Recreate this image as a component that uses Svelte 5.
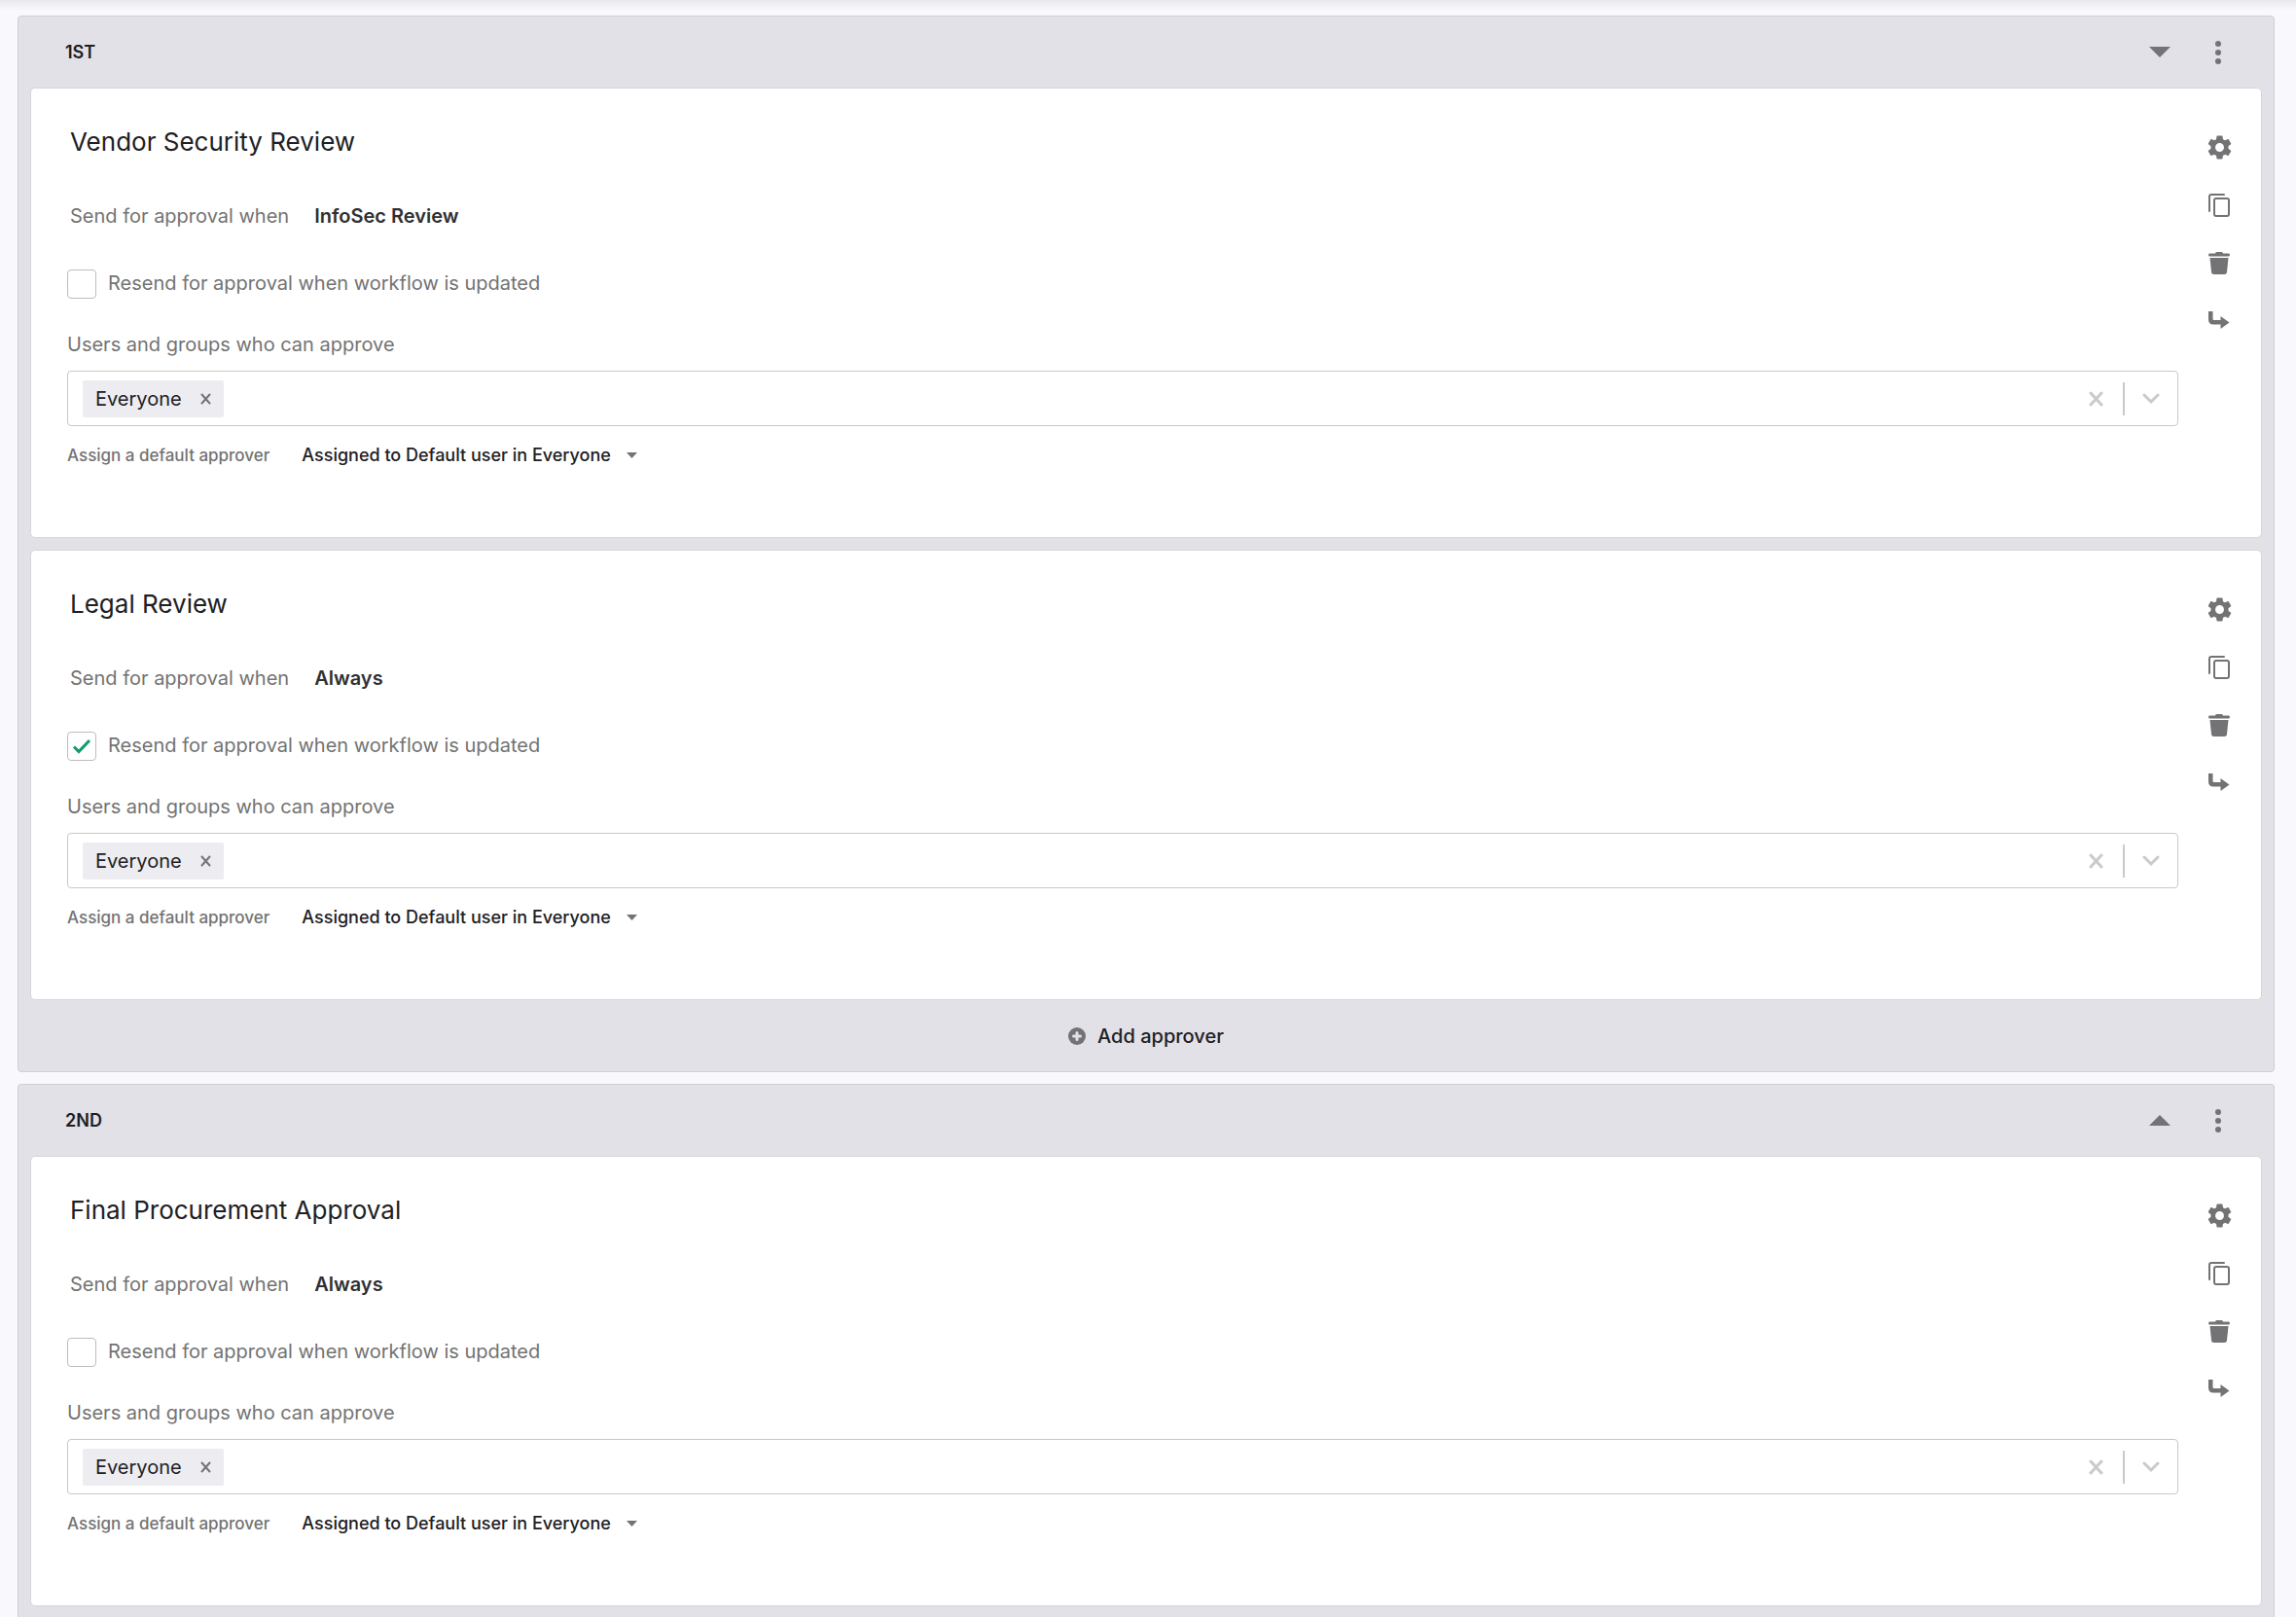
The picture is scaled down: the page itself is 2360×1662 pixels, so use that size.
<script>
  let groups = $state([
    {
      name: '1ST',
      moveLabel: 'Move group down',
      up: false,
      canAdd: true,
      approvers: [
        { title: 'Vendor Security Review', condition: 'InfoSec Review', resend: false, members: ['Everyone'] },
        { title: 'Legal Review', condition: 'Always', resend: true, members: ['Everyone'] }
      ]
    },
    {
      name: '2ND',
      moveLabel: 'Move group up',
      up: true,
      canAdd: false,
      approvers: [
        { title: 'Final Procurement Approval', condition: 'Always', resend: false, members: ['Everyone'] }
      ]
    }
  ]);

  function addApprover(group) {
    group.approvers.push({ title: 'New approver', condition: 'Always', resend: false, members: [] });
  }

  function duplicate(group, i) {
    const copy = $state.snapshot(group.approvers[i]);
    group.approvers.splice(i + 1, 0, copy);
  }

  function remove(group, i) {
    group.approvers.splice(i, 1);
  }

  function removeMember(approver, name) {
    approver.members = approver.members.filter((m) => m !== name);
  }
</script>

<main class="page">
  {#each groups as group, g}
    <section class="group">
      <header class="group-head">
        <h2>{group.name}</h2>
        <div class="head-actions">
          <button class="icon-btn" aria-label={group.moveLabel}>
            <svg width="22" height="11" viewBox="0 0 22 11">
              {#if group.up}
                <path d="M0 11 11 0l11 11z" />
              {:else}
                <path d="M0 0h22L11 11z" />
              {/if}
            </svg>
          </button>
          <button class="icon-btn" aria-label="Group options">
            <svg width="6" height="24" viewBox="0 0 6 24">
              <circle cx="3" cy="3" r="3" />
              <circle cx="3" cy="12" r="3" />
              <circle cx="3" cy="21" r="3" />
            </svg>
          </button>
        </div>
      </header>

      <div class="cards">
        {#each group.approvers as approver, i}
          {@const id = `approver-${g}-${i}`}
          <article class="card">
            <div class="card-body">
              <h3>{approver.title}</h3>

              <div class="condition">
                <span>Send for approval when</span>
                <button class="condition-btn">{approver.condition}</button>
              </div>

              <label class="resend">
                <span class="box">
                  <input type="checkbox" bind:checked={approver.resend} />
                  <svg class="tick" width="20" height="16" viewBox="0 0 20 16">
                    <path d="M2 8.500 7 13.500 18 2" />
                  </svg>
                </span>
                <span>Resend for approval when workflow is updated</span>
              </label>

              <label class="field-label" for="{id}-members">Users and groups who can approve</label>
              <div class="multi">
                {#each approver.members as name}
                  <span class="chip">
                    {name}
                    <button class="chip-x" aria-label="Remove {name}" onclick={() => removeMember(approver, name)}>
                      <svg width="11" height="12" viewBox="0 0 11 12"><path d="M1.500 1.500l8 9M9.500 1.500l-8 9" /></svg>
                    </button>
                  </span>
                {/each}
                <input id="{id}-members" type="text" role="combobox" aria-expanded="false" aria-controls="{id}-list" autocomplete="off" />
                <button class="clear" aria-label="Clear all" onclick={() => (approver.members = [])}>
                  <svg width="15" height="16" viewBox="0 0 15 16"><path d="M2 2l11 12M13 2 2 14" /></svg>
                </button>
                <span class="sep"></span>
                <button class="open" aria-label="Show options">
                  <svg width="18" height="12" viewBox="0 0 18 12"><path d="M2 2l7 7 7-7" /></svg>
                </button>
              </div>

              <div class="default">
                <label for="{id}-default">Assign a default approver</label>
                <span class="default-select">
                  <select id="{id}-default">
                    <option>Assigned to Default user in Everyone</option>
                  </select>
                  <svg width="11" height="6" viewBox="0 0 11 6"><path d="M0 0h11L5.500 6z" /></svg>
                </span>
              </div>
            </div>

            <div class="card-tools">
              <button class="icon-btn" aria-label="Settings">
                <svg width="29" height="29" viewBox="0 0 24 24">
                  <path d="M19.430 12.980c.04-.32.07-.64.07-.98s-.03-.66-.07-.98l2.110-1.650c.19-.15.24-.42.12-.64l-2-3.460c-.12-.22-.39-.3-.61-.22l-2.490 1c-.52-.4-1.080-.73-1.690-.98l-.38-2.650A.488.488 0 0 0 14 2h-4c-.25 0-.46.18-.49.42l-.38 2.650c-.61.25-1.170.59-1.690.98l-2.490-1c-.23-.09-.49 0-.61.22l-2 3.460c-.13.22-.07.49.12.64l2.110 1.650c-.04.32-.07.65-.07.98s.03.66.07.98l-2.110 1.650c-.19.15-.24.42-.12.64l2 3.460c.12.22.39.3.61.22l2.490-1c.52.4 1.080.73 1.690.98l.38 2.650c.03.24.24.42.49.42h4c.25 0 .46-.18.49-.42l.38-2.650c.61-.25 1.170-.59 1.690-.98l2.490 1c.23.09.49 0 .61-.22l2-3.460c.12-.22.07-.49-.12-.64l-2.110-1.650zM12 15.700a3.700 3.700 0 1 1 0-7.400 3.700 3.700 0 0 1 0 7.400z" />
                </svg>
              </button>
              <button class="icon-btn" aria-label="Duplicate" onclick={() => duplicate(group, i)}>
                <svg class="line" width="22" height="24" viewBox="0 0 22 24">
                  <path d="M16 1H3a2 2 0 0 0-2 2v15" />
                  <rect x="6" y="5" width="15" height="18" rx="2" />
                </svg>
              </button>
              <button class="icon-btn" aria-label="Delete" onclick={() => remove(group, i)}>
                <svg width="22" height="24" viewBox="0 0 22 24">
                  <path d="M7 1.500C7.300.6 7.700 0 8.500 0h5c.8 0 1.200.6 1.500 1.500h5.500c.8 0 1.500.6 1.500 1.500s-.6 1.500-1.500 1.500h-19C.6 4.500 0 3.900 0 3s.7-1.500 1.500-1.500z" />
                  <path d="M1.500 6h19L19 20.500c-.2 1.800-1.200 2.500-2.800 2.500H5.800C4.200 23 3.200 22.300 3 20.500z" />
                </svg>
              </button>
              <button class="icon-btn" aria-label="Move to another group">
                <svg width="22" height="22" viewBox="0 0 22 22">
                  <path d="M0 0h4.500v7.500c0 1 .5 1.500 1.500 1.500h6.500V5l9 6.500-9 6.500v-4.500H5c-3.200 0-5-1.800-5-5z" />
                </svg>
              </button>
            </div>
          </article>
        {/each}
      </div>

      {#if group.canAdd}
        <footer class="group-foot">
          <button class="add-btn" onclick={() => addApprover(group)}>
            <svg width="18" height="18" viewBox="0 0 18 18">
              <circle cx="9" cy="9" r="9" />
              <path class="plus" d="M9 5.500v7M5.500 9h7" />
            </svg>
            Add approver
          </button>
        </footer>
      {/if}
    </section>
  {/each}
</main>

<style>
  :global(body) { margin: 0; background: #f9f9fd; }

  .page {
    box-sizing: border-box;
    min-height: 100vh;
    display: flex;
    flex-direction: column;
    gap: 12px;
    padding: 16px 22px 0 18px;
    background: linear-gradient(#e8e8eb, #f9f9fd 10px);
    font-family: Inter, "Liberation Sans", sans-serif;
    font-size: 20px;
    line-height: 28px;
    color: #737373;
  }

  button, input, select { font: inherit; color: inherit; }
  button {
    display: flex;
    align-items: center;
    padding: 0;
    border: none;
    background: none;
    cursor: pointer;
  }
  svg { display: block; fill: #737376; }

  /* group */
  .group {
    background: #e2e1e7;
    border: 1px solid #cfcfd3;
    border-radius: 4px;
  }
  .group:last-child {
    flex: 1;
    border-bottom: none;
    border-radius: 4px 4px 0 0;
  }

  .group-head {
    display: flex;
    align-items: center;
    justify-content: space-between;
    height: 73px;
    padding: 0 39px 0 48px;
  }
  .group-head h2 {
    margin: 0;
    font-size: 18px;
    font-weight: 600;
    color: #202024;
  }
  .head-actions { display: flex; gap: 24px; }

  .icon-btn {
    justify-content: center;
    width: 36px;
    height: 36px;
  }

  .cards {
    display: flex;
    flex-direction: column;
    gap: 12px;
    padding: 0 12px;
  }

  .group-foot {
    display: flex;
    align-items: center;
    justify-content: center;
    height: 73px;
  }
  .add-btn {
    gap: 12px;
    font-weight: 500;
    color: #202024;
  }
  .plus { stroke: #e2e1e7; stroke-width: 3; stroke-linecap: round; }

  /* card */
  .card {
    display: flex;
    background: #fff;
    border: 1px solid #d6d6da;
    border-radius: 5px;
  }
  .card-body {
    flex: 1;
    min-width: 0;
    padding: 39px 0 70px 37px;
  }
  .card-tools {
    display: flex;
    flex-direction: column;
    gap: 24px;
    padding: 42px 25px 0 24px;
  }
  .line { fill: none; stroke: #737376; stroke-width: 2; stroke-linecap: round; }

  h3 {
    margin: 0 0 46px 3px;
    font-size: 26px;
    font-weight: 400;
    line-height: 32px;
    color: #202024;
  }

  .condition {
    display: flex;
    gap: 26px;
    margin: 0 0 41px 3px;
  }
  .condition-btn { font-weight: 600; color: #303033; }

  .resend {
    display: flex;
    width: fit-content;
    gap: 12px;
    margin-bottom: 33px;
  }
  .box { display: grid; place-items: center; }
  .box > * { grid-area: 1 / 1; }
  .box input {
    appearance: none;
    box-sizing: border-box;
    width: 30px;
    height: 30px;
    margin: 0;
    border: 1px solid #bdbdc2;
    border-radius: 4px;
    background: #fff;
  }
  .tick {
    visibility: hidden;
    pointer-events: none;
    fill: none;
    stroke: #109c6c;
    stroke-width: 3;
  }
  .box input:checked + .tick { visibility: visible; }

  .field-label { display: block; width: fit-content; margin-bottom: 13px; }

  .multi {
    box-sizing: border-box;
    display: flex;
    align-items: center;
    height: 57px;
    margin-bottom: 16px;
    padding-left: 15px;
    border: 1px solid #c8c8cc;
    border-radius: 4px;
  }
  .multi input {
    flex: 1;
    min-width: 0;
    height: 38px;
    padding: 0 8px;
    border: none;
    outline: none;
    background: none;
  }
  .multi svg {
    fill: none;
    stroke: #cacacd;
    stroke-width: 3;
    stroke-linecap: round;
  }
  .chip {
    display: flex;
    align-items: center;
    height: 38px;
    padding-left: 13px;
    border-radius: 2px;
    background: #ededf1;
    color: #202024;
  }
  .chip-x { height: 38px; padding: 0 13px 0 19px; }
  .multi .chip-x svg { stroke: #737376; stroke-width: 2; }
  .clear, .open { height: 55px; }
  .clear { padding: 0 20px; }
  .open { padding: 0 18px; }
  .sep { width: 2px; height: 34px; background: #cacacd; }

  .default {
    display: flex;
    gap: 33px;
    font-size: 18px;
    font-weight: 500;
  }
  .default label { font-size: 17px; }
  .default-select { display: flex; align-items: center; gap: 16px; }
  .default select {
    appearance: none;
    padding: 0;
    border: none;
    background: none;
    color: #202024;
  }
  .default-select svg { pointer-events: none; }
</style>
